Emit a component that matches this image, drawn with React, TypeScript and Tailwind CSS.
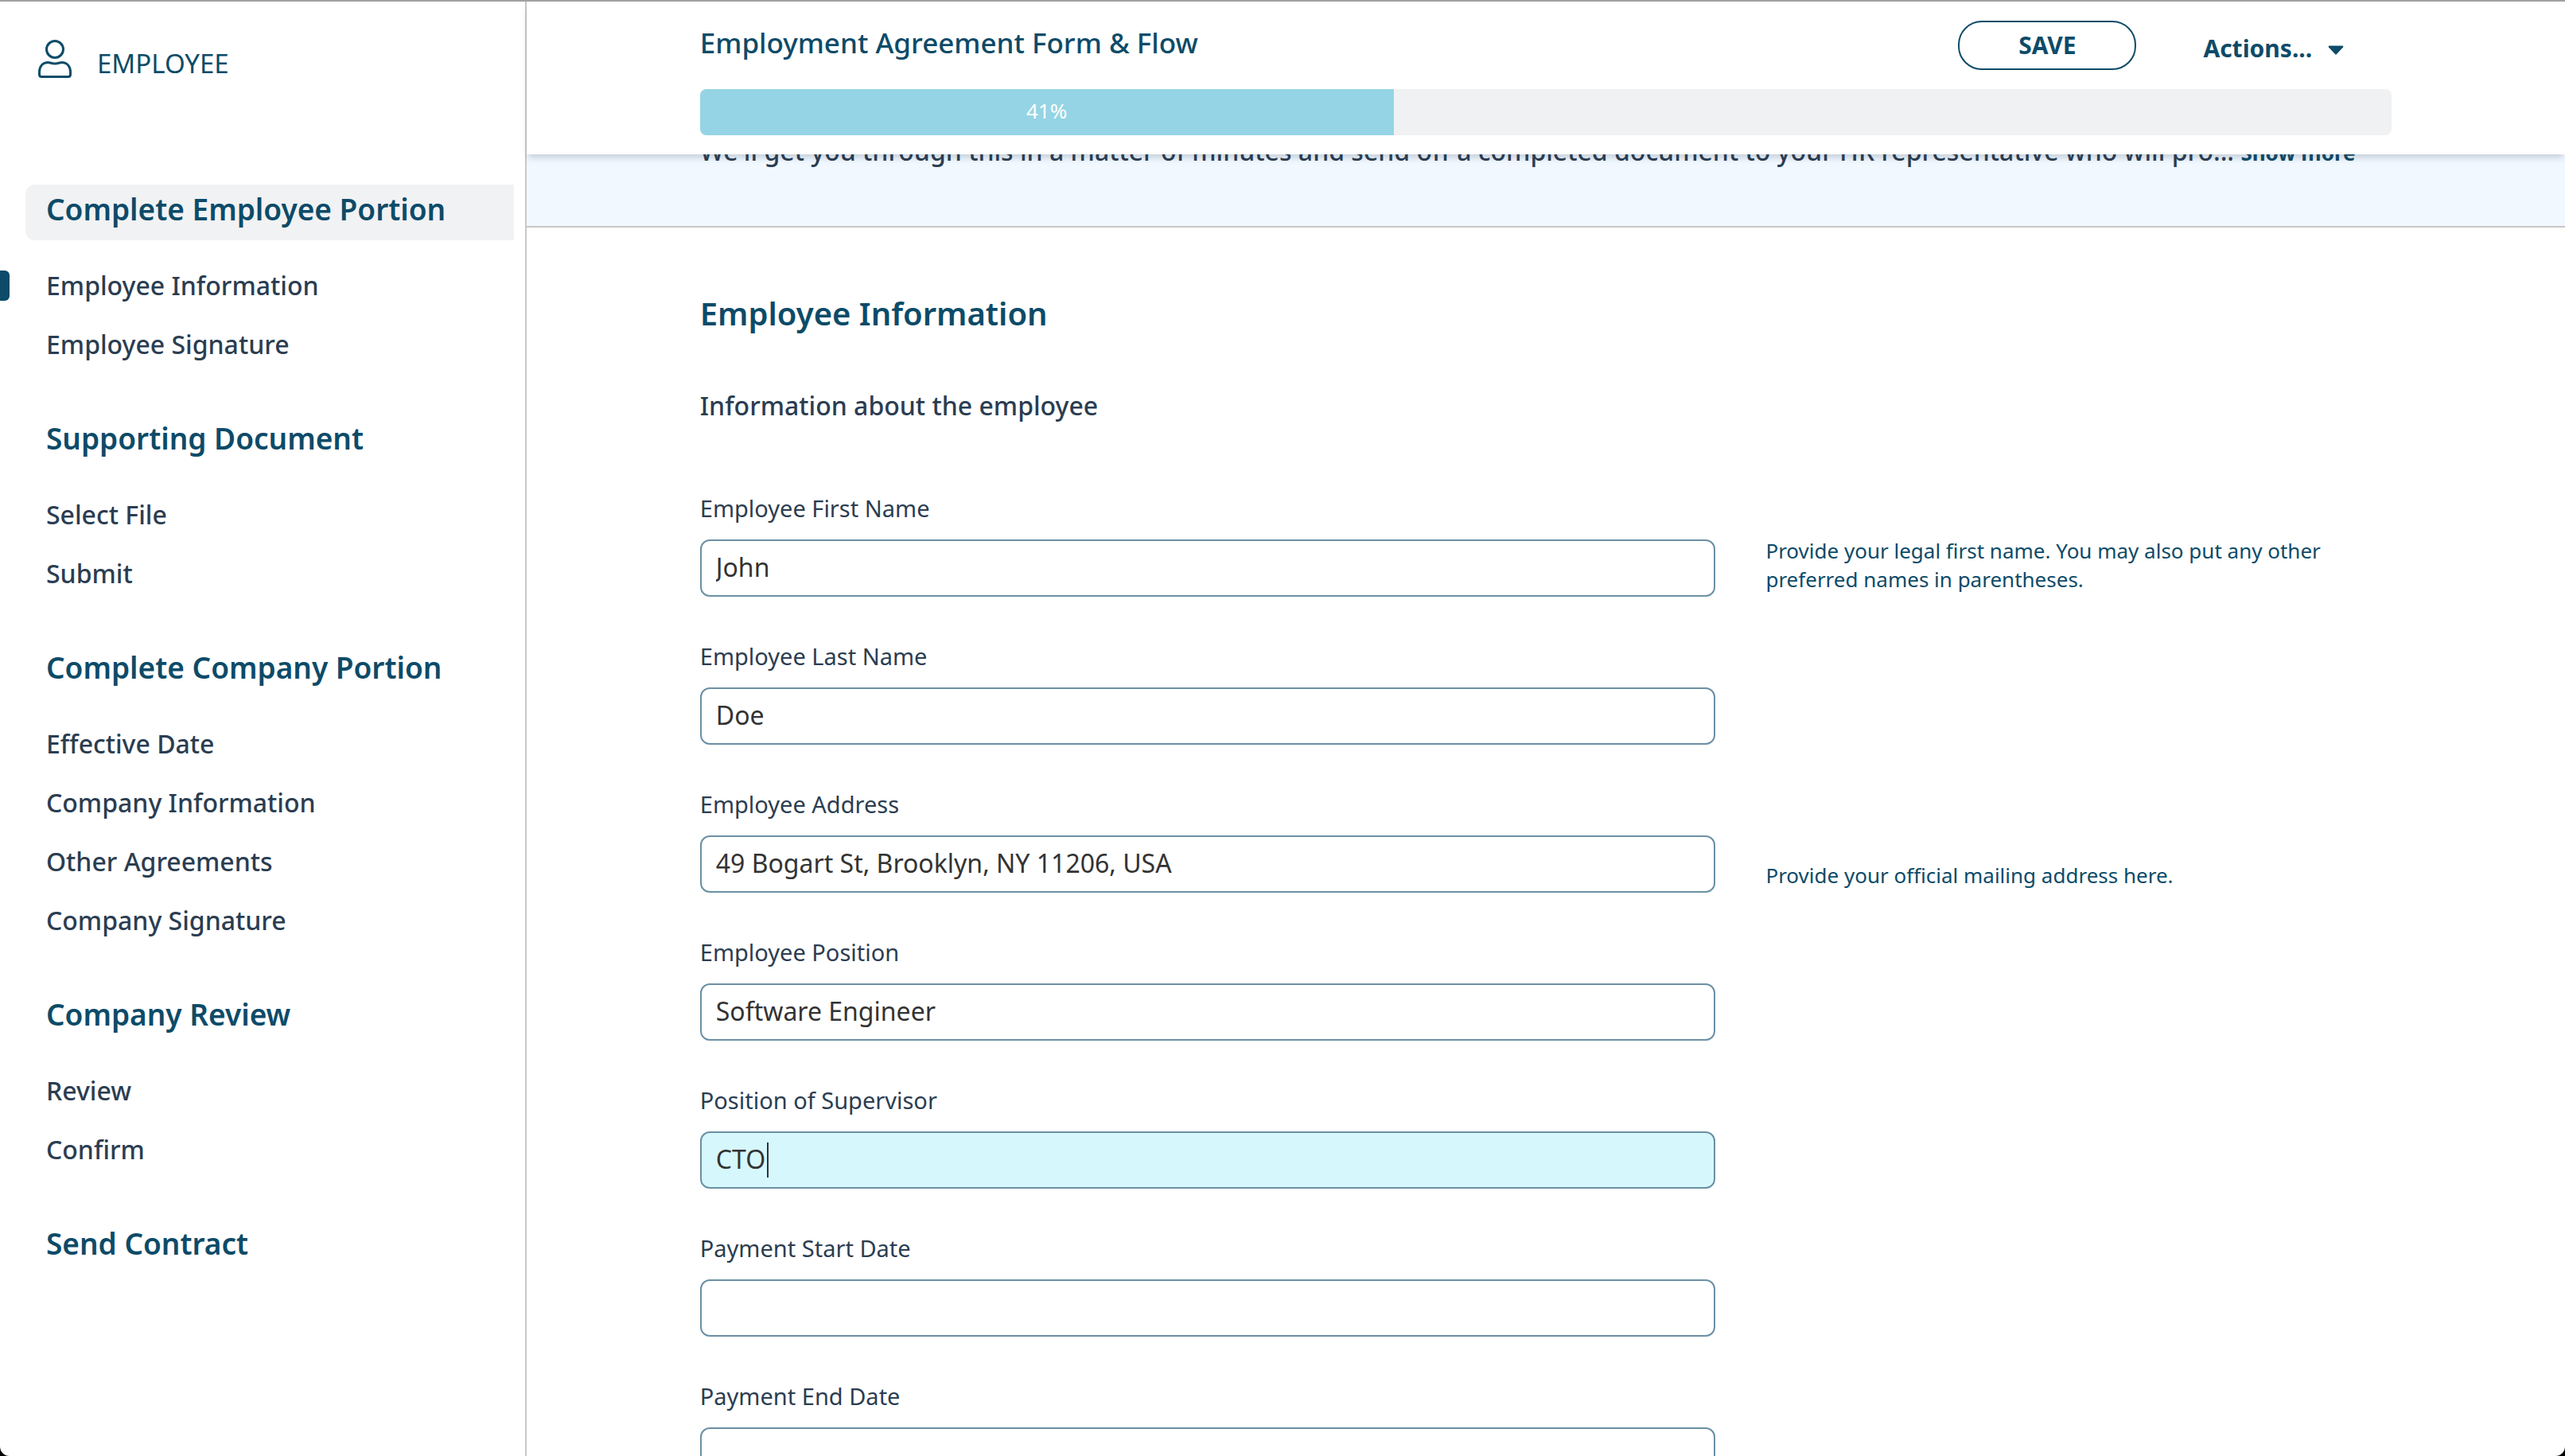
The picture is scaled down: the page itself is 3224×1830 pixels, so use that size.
import { useState } from "react";

type Group = { title: string; active?: boolean; items: { label: string; current?: boolean }[] };

const groups: Group[] = [
  {
    title: "Complete Employee Portion",
    active: true,
    items: [{ label: "Employee Information", current: true }, { label: "Employee Signature" }],
  },
  { title: "Supporting Document", items: [{ label: "Select File" }, { label: "Submit" }] },
  {
    title: "Complete Company Portion",
    items: [
      { label: "Effective Date" },
      { label: "Company Information" },
      { label: "Other Agreements" },
      { label: "Company Signature" },
    ],
  },
  { title: "Company Review", items: [{ label: "Review" }, { label: "Confirm" }] },
  { title: "Send Contract", items: [] },
];

type FieldData = { id: string; label: string; value: string; help?: string; focused?: boolean };

const fields: FieldData[] = [
  {
    id: "first-name",
    label: "Employee First Name",
    value: "John",
    help: "Provide your legal first name. You may also put any other preferred names in parentheses.",
  },
  { id: "last-name", label: "Employee Last Name", value: "Doe" },
  {
    id: "address",
    label: "Employee Address",
    value: "49 Bogart St, Brooklyn, NY 11206, USA",
    help: "Provide your official mailing address here.",
  },
  { id: "position", label: "Employee Position", value: "Software Engineer" },
  { id: "supervisor", label: "Position of Supervisor", value: "CTO", focused: true },
  { id: "start-date", label: "Payment Start Date", value: "" },
  { id: "end-date", label: "Payment End Date", value: "" },
];

function PersonIcon() {
  return (
    <svg viewBox="0 0 42 48" className="h-12 w-[42px]" fill="none" stroke="currentColor" strokeWidth="3" aria-hidden="true">
      <circle cx="21" cy="12" r="10.5" />
      <path d="M12.5 28.5C14.5 28.5 17 30 21 30s6.500-1.500 8.500-1.500C36.500 28.500 40.500 33.500 40.500 40.500V43.500Q40.500 46.500 37.500 46.500H4.500Q1.500 46.500 1.500 43.500V40.500C1.500 33.500 5.500 28.500 12.500 28.500Z" strokeLinejoin="round" />
    </svg>
  );
}

function Sidebar() {
  return (
    <aside className="w-[662px] shrink-0 border-r-2 border-[#c8c8c8] pt-12">
      <div className="flex items-start gap-8 pl-12 text-[#0d4b68]">
        <PersonIcon />
        <span className="pt-1.5 text-[33px] leading-[48px]">EMPLOYEE</span>
      </div>
      <nav className="mt-32 flex flex-col gap-[50px]" aria-label="Steps">
        {groups.map((group) => (
          <div key={group.title}>
            <h2
              className={
                group.active
                  ? "mr-[14px] ml-8 flex h-[70px] items-center rounded-l-xl bg-[#f1f2f4] pb-2 pl-[26px] text-[37px] font-semibold text-[#0d4b68]"
                  : "mr-[14px] ml-8 flex h-[70px] items-center rounded-l-xl pb-2 pl-[26px] text-[37px] font-semibold text-[#0d4b68]"
              }
            >
              {group.title}
            </h2>
            {group.items.length > 0 && (
              <ul className="mt-5">
                {group.items.map((item) => (
                  <li key={item.label} className="relative flex h-[74px] items-center pl-[58px]">
                    {item.current && <span className="absolute left-0 h-[38px] w-3 rounded-r-md bg-[#0d4b68]" />}
                    <a href="#" className="text-[32px] font-medium text-[#2b3d51]">
                      {item.label}
                    </a>
                  </li>
                ))}
              </ul>
            )}
          </div>
        ))}
      </nav>
    </aside>
  );
}

function Header() {
  return (
    <header className="relative z-10 bg-white pb-6 shadow-[0_6px_8px_-2px_rgba(40,60,80,0.22)]">
      <div className="mx-auto w-[83%]">
        <div className="flex items-start pt-6 text-[#0d4b68]">
          <h1 className="pt-0.5 text-[35px] leading-[52px] font-medium">Employment Agreement Form &amp; Flow</h1>
          <div className="ml-auto flex items-start gap-[84px] pr-[60px]">
            <button type="button" className="h-[62px] w-56 rounded-[30px] border-2 border-[#0d4b68] pb-0.5 text-[30px] font-bold">
              SAVE
            </button>
            <button type="button" className="flex items-center gap-5 pt-[11px] text-[30px] leading-[48px] font-bold">
              Actions...
              <svg viewBox="0 0 20 12" className="mt-1 h-3 w-5" fill="currentColor" aria-hidden="true">
                <path d="M1.500 0.500H18.500Q20 1 19 2.500L11 11Q10 12 9 11L1 2.500Q0 1 1.500 0.500Z" />
              </svg>
            </button>
          </div>
        </div>
        <div
          className="mt-6 h-[58px] overflow-hidden rounded-lg bg-[#f0f1f3]"
          role="progressbar"
          aria-label="Form progress"
          aria-valuenow={41}
          aria-valuemin={0}
          aria-valuemax={100}
        >
          <div className="flex h-full w-[41%] items-center justify-center bg-[#95d4e4] pb-1 text-[26px] text-white">41%</div>
        </div>
      </div>
    </header>
  );
}

function Intro() {
  return (
    <section className="-mt-7 border-b-2 border-[#c8c8c8] bg-[#f1f8ff] pt-0.5 pb-[70px]">
      <p className="mx-auto w-[83%] text-[32px] leading-[44px] font-medium whitespace-nowrap text-[#2b3d51]">
        We'll get you through this in a matter of minutes and send off a completed document to your HR representative who will pro...{" "}
        <a href="#" className="text-[26px] font-bold text-[#0d4b68]">
          Show more
        </a>
      </p>
    </section>
  );
}

function Field({ field }: { field: FieldData }) {
  const [value, setValue] = useState(field.value);
  return (
    <div className="flex items-end gap-[3%]">
      <div className="w-[60%]">
        <label htmlFor={field.id} className="block pb-[19px] text-[29px] leading-10 text-[#2b3d51]">
          {field.label}
        </label>
        <div className="relative">
          <input
            id={field.id}
            type="text"
            value={value}
            onChange={(e) => setValue(e.target.value)}
            aria-describedby={field.help ? `${field.id}-help` : undefined}
            className={
              field.focused
                ? "block h-[72px] w-full rounded-xl border-2 border-[#6b90a5] bg-[#d6f8fd] px-[18px] pb-1 text-[32px] text-[#333] outline-none"
                : "block h-[72px] w-full rounded-xl border-2 border-[#6b90a5] bg-white px-[18px] pb-1 text-[32px] text-[#333] outline-none"
            }
          />
          {field.focused && <span className="absolute top-3.5 left-[84px] h-11 w-0.5 bg-[#333]" />}
        </div>
      </div>
      {field.help && (
        <p id={`${field.id}-help`} className="flex-1 pb-1 text-[26px] leading-9 text-[#0d4b68]">
          {field.help}
        </p>
      )}
    </div>
  );
}

export default function App() {
  return (
    <div className="h-screen bg-black font-['Noto_Sans',sans-serif]">
      <div className="flex h-full overflow-hidden rounded-b-[12px] border-t-2 border-[#a0a0a0] bg-white">
        <Sidebar />
        <div className="min-w-0 flex-1">
          <Header />
          <Intro />
          <main className="mx-auto w-[83%] pt-20">
            <h2 className="text-[40px] leading-[56px] font-semibold text-[#0d4b68]">Employee Information</h2>
            <p className="mt-16 text-[32px] leading-[48px] font-medium text-[#2b3d51]">Information about the employee</p>
            <form className="mt-[85px] flex flex-col gap-[55px]">
              {fields.map((field) => (
                <Field key={field.id} field={field} />
              ))}
            </form>
          </main>
        </div>
      </div>
    </div>
  );
}
